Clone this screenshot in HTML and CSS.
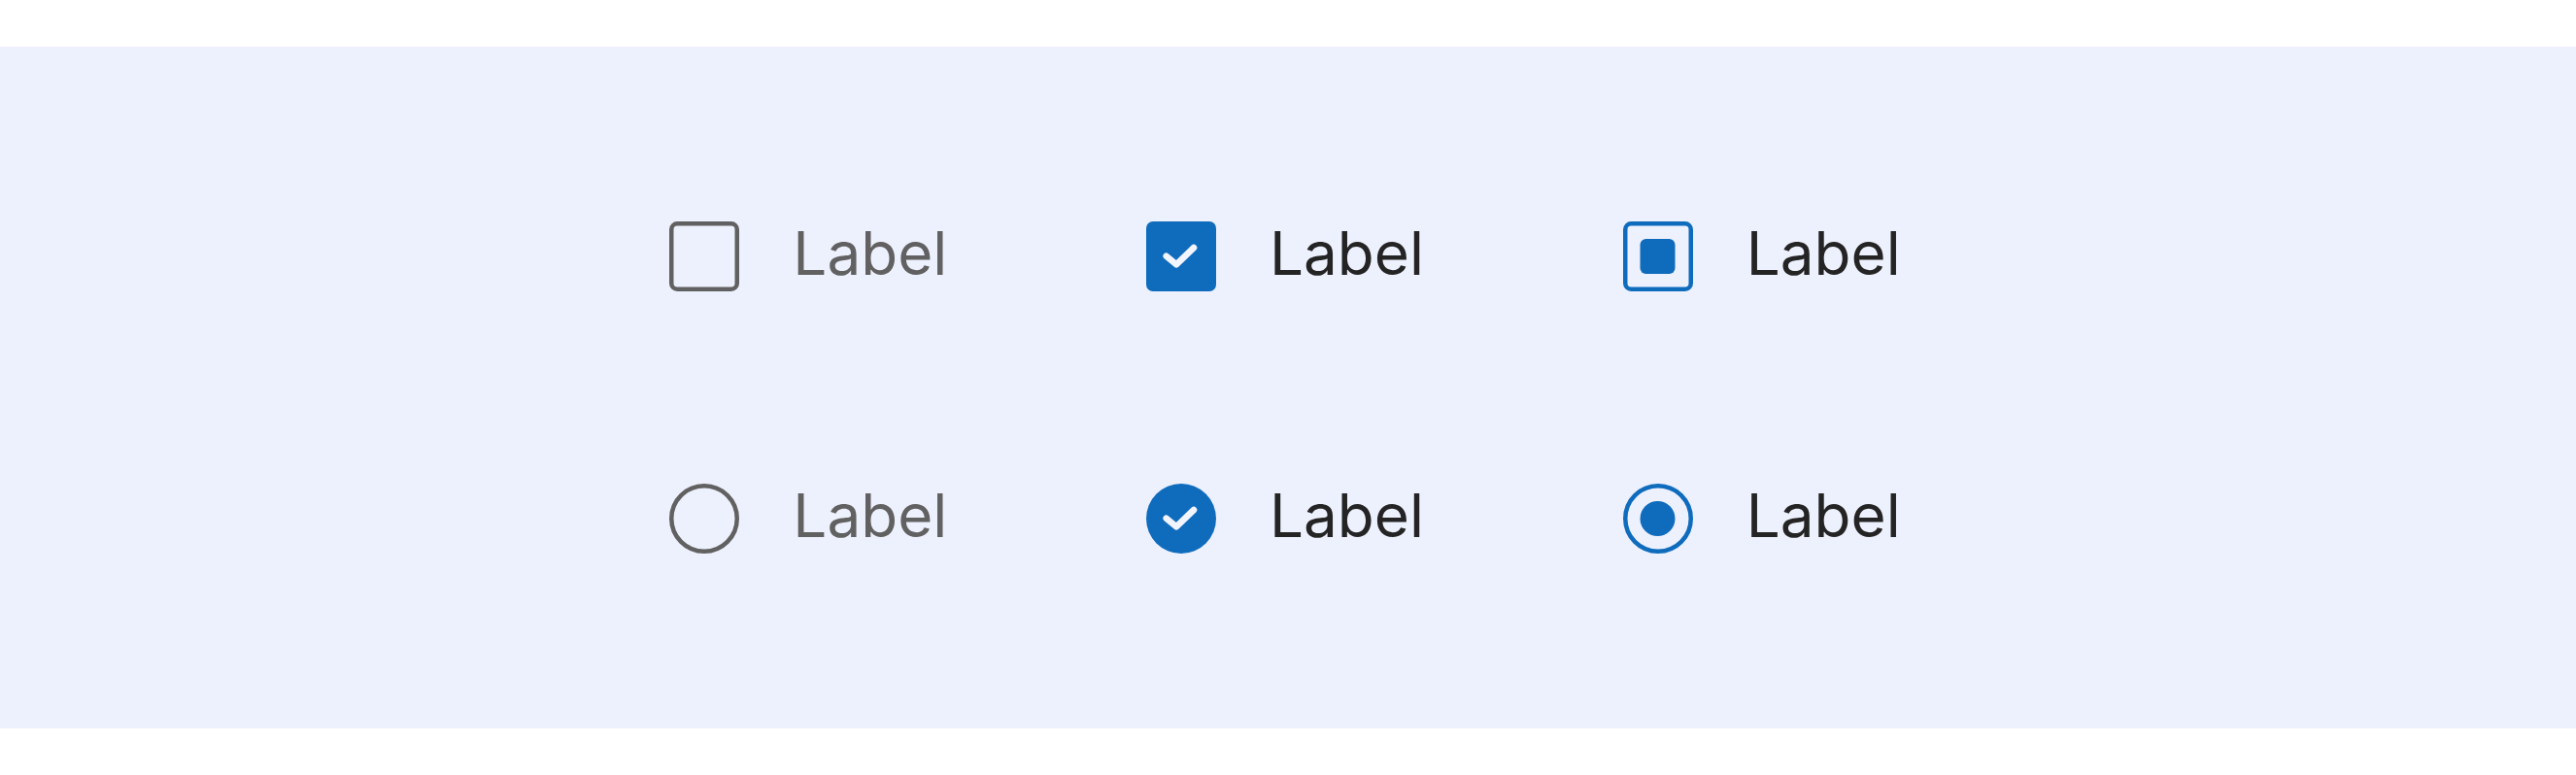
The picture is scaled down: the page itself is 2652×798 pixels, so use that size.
FILE: index.html
```html
<!DOCTYPE html>
<html>
<head>
<meta charset="utf-8">
<link rel="stylesheet" href="styles.css">
</head>
<body>
<main class="panel">
  <div class="grid">
    <label class="item item--off">
      <svg class="ctl" viewBox="0 0 72 72"><rect x="2.25" y="2.25" width="67.5" height="67.5" rx="6" fill="none" stroke="#616161" stroke-width="4.5"/></svg>
      <span class="text">Label</span>
    </label>
    <label class="item">
      <svg class="ctl" viewBox="0 0 72 72"><rect x="0" y="0" width="72" height="72" rx="7" fill="#0F6CBD"/><path d="M20.7 35.7 L31 44.3 L49 27" fill="none" stroke="#F2F4FE" stroke-width="6.6" stroke-linecap="round" stroke-linejoin="round"/></svg>
      <span class="text">Label</span>
    </label>
    <label class="item">
      <svg class="ctl" viewBox="0 0 72 72"><rect x="2.25" y="2.25" width="67.5" height="67.5" rx="6" fill="none" stroke="#0F6CBD" stroke-width="4.5"/><rect x="17.5" y="18" width="36" height="36" rx="6" fill="#0F6CBD"/></svg>
      <span class="text">Label</span>
    </label>
    <label class="item item--off">
      <svg class="ctl" viewBox="0 0 72 72"><circle cx="36" cy="36" r="33.75" fill="none" stroke="#616161" stroke-width="4.5"/></svg>
      <span class="text">Label</span>
    </label>
    <label class="item">
      <svg class="ctl" viewBox="0 0 72 72"><circle cx="36" cy="36" r="36" fill="#0F6CBD"/><path d="M20.7 35.7 L31 44.3 L49 27" fill="none" stroke="#F2F4FE" stroke-width="6.6" stroke-linecap="round" stroke-linejoin="round"/></svg>
      <span class="text">Label</span>
    </label>
    <label class="item">
      <svg class="ctl" viewBox="0 0 72 72"><circle cx="36" cy="36" r="33.75" fill="none" stroke="#0F6CBD" stroke-width="4.5"/><circle cx="35.5" cy="36" r="18" fill="#0F6CBD"/></svg>
      <span class="text">Label</span>
    </label>
  </div>
</main>
</body>
</html>
```

FILE: styles.css
```css
html, body {
  margin: 0;
  padding: 0;
  background: #ffffff;
}

body {
  padding-top: 48px;
  font-family: Inter, "Noto Sans", sans-serif;
}

.panel {
  height: 702px;
  background: #EDF0FD;
  display: flex;
  align-items: center;
  justify-content: center;
}

.grid {
  display: grid;
  grid-template-columns: repeat(3, 292px);
  grid-auto-rows: 72px;
  column-gap: 198.67px;
  row-gap: 198px;
}

.item {
  display: flex;
  align-items: center;
  gap: 55px;
  color: #242424;
}

.item--off {
  color: #616161;
}

.ctl {
  width: 72px;
  height: 72px;
  flex: none;
  display: block;
}

.text {
  font-size: 62px;
  line-height: 72px;
  position: relative;
  top: -3px;
}
```
